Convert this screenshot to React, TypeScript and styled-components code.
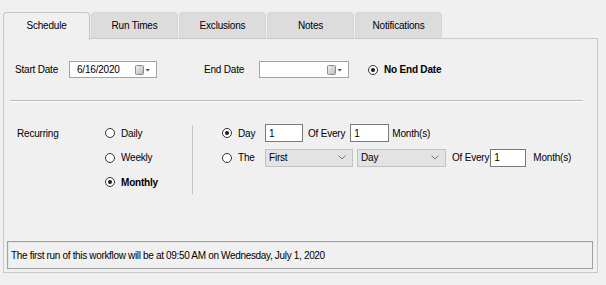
import styled, { createGlobalStyle } from "styled-components";

const GlobalStyle = createGlobalStyle`
  html, body {
    margin: 0;
    padding: 0;
    background: #f0f0f0;
  }
  body {
    font-family: "Liberation Sans", Arial, sans-serif;
    font-size: 10px;
    letter-spacing: -0.2px;
    color: #000;
  }
`;

const Screen = styled.div`
  width: 606px;
  height: 285px;
  padding: 12px 0 0 3px;
  box-sizing: border-box;
  background: #f0f0f0;
`;

const TabStrip = styled.div`
  display: flex;
  height: 26px;
  gap: 1px;
`;

const Tab = styled.div<{ active?: boolean }>`
  width: 87px;
  box-sizing: border-box;
  height: ${(p) => (p.active ? "28px" : "26px")};
  display: flex;
  align-items: center;
  justify-content: center;
  padding-bottom: ${(p) => (p.active ? "2px" : "0")};
  border: 1px solid ${(p) => (p.active ? "#c4c4c4" : "#d6d6d6")};
  border-bottom: none;
  border-radius: 4px 4px 0 0;
  background: ${(p) => (p.active ? "#f0f0f0" : "#dcdcdc")};
  position: relative;
  z-index: ${(p) => (p.active ? 2 : 1)};
`;

const Panel = styled.div`
  width: 595px;
  height: 235px;
  box-sizing: border-box;
  border: 1px solid #c9c9c9;
  background: #f0f0f0;
  display: flex;
  flex-direction: column;
`;

const DateRow = styled.div`
  display: flex;
  align-items: center;
  height: 17px;
  margin-top: 22px;
  padding-left: 11px;
`;

const FieldLabel = styled.span<{ w: number; ml?: number }>`
  width: ${(p) => p.w}px;
  margin-left: ${(p) => p.ml ?? 0}px;
  flex-shrink: 0;
`;

const DateBox = styled.div<{ w: number }>`
  width: ${(p) => p.w}px;
  height: 17px;
  box-sizing: border-box;
  border: 1px solid #a3a3a3;
  background: #fff;
  display: flex;
  align-items: center;
  padding: 0 5px 0 7px;
  justify-content: space-between;
`;

const Separator = styled.div`
  height: 1px;
  margin: 22px 14px 0 6px;
  background: #b9b9b9;
  border-bottom: 1px solid #ffffff;
`;

const RecurSection = styled.div`
  display: flex;
  margin-top: 22px;
  height: 70px;
`;

const RecurLabel = styled.div`
  width: 88px;
  margin-left: 13px;
  height: 18px;
  display: flex;
  align-items: center;
`;

const Column = styled.div<{ w?: number }>`
  display: flex;
  flex-direction: column;
  gap: 6.5px;
  width: ${(p) => (p.w ? `${p.w}px` : "auto")};
`;

const Divider = styled.div`
  width: 1px;
  height: 69px;
  margin-top: 1px;
  background: #c4c4c4;
  margin-right: 29px;
`;

const Row = styled.div`
  display: flex;
  align-items: center;
  height: 18px;
`;

const RadioWrap = styled.label<{ w?: number; bold?: boolean }>`
  display: flex;
  align-items: center;
  gap: 6px;
  width: ${(p) => (p.w ? `${p.w}px` : "auto")};
  font-weight: ${(p) => (p.bold ? 700 : 400)};
  flex-shrink: 0;
`;

const Circle = styled.span<{ checked?: boolean }>`
  width: 10px;
  height: 10px;
  box-sizing: border-box;
  border-radius: 50%;
  border: 1px solid #333;
  background: #fff;
  display: flex;
  align-items: center;
  justify-content: center;
  &::after {
    content: "";
    width: 4px;
    height: 4px;
    border-radius: 50%;
    background: ${(p) => (p.checked ? "#1a1a1a" : "transparent")};
  }
`;

const TextBox = styled.div<{ w: number }>`
  width: ${(p) => p.w}px;
  height: 18px;
  box-sizing: border-box;
  border: 1px solid #7a7a7a;
  background: #fff;
  display: flex;
  align-items: center;
  padding-left: 3px;
  flex-shrink: 0;
`;

const Select = styled.div<{ w: number; ml?: number }>`
  width: ${(p) => p.w}px;
  margin-left: ${(p) => p.ml ?? 0}px;
  height: 18px;
  box-sizing: border-box;
  border: 1px solid #c2c2c2;
  background: #e3e3e3;
  display: flex;
  align-items: center;
  justify-content: space-between;
  padding: 0 6px 0 3px;
  flex-shrink: 0;
`;

const Inline = styled.span<{ ml?: number; mr?: number }>`
  margin-left: ${(p) => p.ml ?? 0}px;
  margin-right: ${(p) => p.mr ?? 0}px;
  flex-shrink: 0;
`;

const StatusBox = styled.div`
  margin: 47px 4px 0 3px;
  height: 28px;
  box-sizing: border-box;
  border: 1px solid #a0a0a0;
  box-shadow: inset 1px 1px 0 #e6e6e6;
  display: flex;
  align-items: center;
  padding-left: 3px;
  letter-spacing: -0.33px;
`;

const CalendarIcon = () => (
  <svg width="16" height="10" viewBox="0 0 16 10">
    <defs>
      <linearGradient id="cal" x1="0" y1="0" x2="1" y2="1">
        <stop offset="0" stopColor="#f4f4f4" />
        <stop offset="1" stopColor="#b8b8b8" />
      </linearGradient>
    </defs>
    <rect x="0.5" y="0.5" width="8" height="9" rx="1" fill="url(#cal)" stroke="#8c8c8c" />
    <path d="M10.5 4 L15 4 L12.75 6.5 Z" fill="#3c5a8a" />
  </svg>
);

const Chevron = () => (
  <svg width="8" height="5" viewBox="0 0 8 5">
    <path d="M0.5 0.5 L4 4 L7.5 0.5" fill="none" stroke="#777" strokeWidth="1" />
  </svg>
);

const Radio = ({ label, checked, bold, w }: { label: string; checked?: boolean; bold?: boolean; w?: number }) => (
  <RadioWrap w={w} bold={bold}>
    <Circle checked={checked} />
    {label}
  </RadioWrap>
);

const tabs = ["Schedule", "Run Times", "Exclusions", "Notes", "Notifications"];

export default function App() {
  return (
    <Screen>
      <GlobalStyle />
      <TabStrip>
        {tabs.map((t, i) => (
          <Tab key={t} active={i === 0}>
            {t}
          </Tab>
        ))}
      </TabStrip>
      <Panel>
        <DateRow>
          <FieldLabel w={54}>Start Date</FieldLabel>
          <DateBox w={88}>
            <span>6/16/2020</span>
            <CalendarIcon />
          </DateBox>
          <FieldLabel w={55} ml={47}>End Date</FieldLabel>
          <DateBox w={90}>
            <span />
            <CalendarIcon />
          </DateBox>
          <Inline ml={19}>
            <Radio label="No End Date" checked bold />
          </Inline>
        </DateRow>
        <Separator />
        <RecurSection>
          <RecurLabel>Recurring</RecurLabel>
          <Column w={87}>
            <Row>
              <Radio label="Daily" />
            </Row>
            <Row>
              <Radio label="Weekly" />
            </Row>
            <Row>
              <Radio label="Monthly" checked bold />
            </Row>
          </Column>
          <Divider />
          <Column>
            <Row>
              <Radio label="Day" checked w={43} />
              <TextBox w={38}>1</TextBox>
              <Inline ml={5} mr={5}>Of Every</Inline>
              <TextBox w={39}>1</TextBox>
              <Inline ml={3}>Month(s)</Inline>
            </Row>
            <Row>
              <Radio label="The" w={43} />
              <Select w={88}>
                <span>First</span>
                <Chevron />
              </Select>
              <Select w={89} ml={4}>
                <span>Day</span>
                <Chevron />
              </Select>
              <Inline ml={6} mr={1}>Of Every</Inline>
              <TextBox w={36}>1</TextBox>
              <Inline ml={7}>Month(s)</Inline>
            </Row>
          </Column>
        </RecurSection>
        <StatusBox>The first run of this workflow will be at 09:50 AM on Wednesday, July 1, 2020</StatusBox>
      </Panel>
    </Screen>
  );
}
